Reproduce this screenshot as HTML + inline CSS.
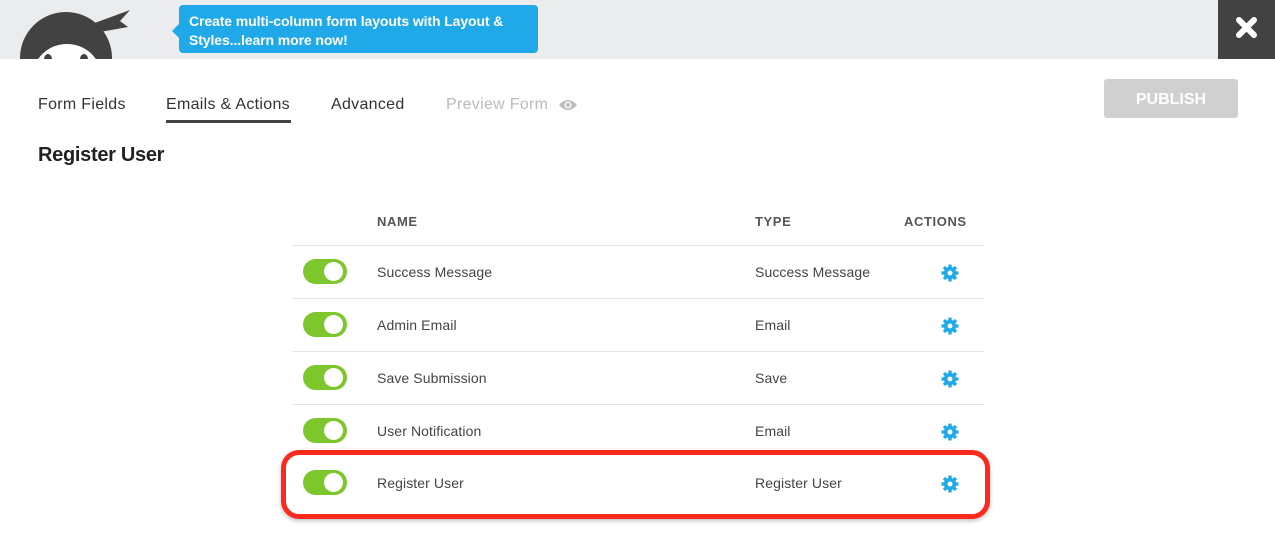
<!DOCTYPE html>
<html><head><style>
body{margin:0;width:1275px;height:545px;background:#fff;font-family:"Liberation Sans",sans-serif;position:relative;overflow:hidden}
.hdr{position:absolute;left:0;top:0;width:1275px;height:59px;background:#ebecee}
.close{position:absolute;left:1218px;top:0;width:57px;height:59px;background:#424242}
.tip{position:absolute;left:179px;top:5px;width:359px;height:48px;background:#1fa9e8;border-radius:4px;color:#fff;font-size:14px;line-height:19px;padding:7px 0 0 10px;box-sizing:border-box;font-weight:bold;letter-spacing:-0.1px}
.tip:before{content:"";position:absolute;left:-7px;top:19px;border-right:7px solid #1fa9e8;border-top:7px solid transparent;border-bottom:7px solid transparent}
.tab{position:absolute;top:96px;font-size:16px;color:#333;letter-spacing:0.3px}
.pub{position:absolute;left:1104px;top:79px;width:134px;height:39px;background:#d0d0d0;border-radius:3px;color:#fff;font-weight:bold;font-size:16px;text-align:center;line-height:41px}
h1{position:absolute;left:38px;top:144px;margin:0;font-size:20px;color:#222;font-weight:bold;letter-spacing:-0.3px}
.th{position:absolute;top:214px;font-size:13px;font-weight:bold;color:#555;letter-spacing:0.6px}
.row{position:absolute;left:292px;width:692px;height:53px;border-top:1px solid #e5e5e5}
.tg{position:absolute;left:11px;top:13px;width:44px;height:25px;border-radius:13px;background:#7dc62c}
.tg:after{content:"";position:absolute;right:4px;top:3px;width:19px;height:19px;border-radius:50%;background:#fff}
.n{position:absolute;left:85px;top:18px;font-size:14px;color:#444;letter-spacing:0.1px}
.t{position:absolute;left:463px;top:18px;font-size:14px;color:#444;letter-spacing:0.1px}
.g{position:absolute;left:649px;top:18px}
.red{position:absolute;left:281px;top:450px;width:709px;height:69px;border:5px solid #fb2a1f;border-radius:18px;box-sizing:border-box;box-shadow:0 2px 4px rgba(0,0,0,.25)}
</style></head><body>
<div class="hdr"></div>
<svg style="position:absolute;left:0;top:0" width="140" height="59">
<path d="M92 24 L130 10 L120 21 L128 27 L100 32Z" fill="#424242"/>
<circle cx="66" cy="58" r="46" fill="#424242"/>
<ellipse cx="67" cy="76" rx="34" ry="32" fill="#fff"/>
<ellipse cx="48" cy="59" rx="4" ry="5" fill="#424242"/>
<ellipse cx="84" cy="59" rx="4" ry="5" fill="#424242"/>
</svg>
<div class="tip">Create multi-column form layouts with Layout &amp;<br>Styles...learn more now!</div>
<div class="close"><svg width="57" height="59"><path d="M21 20 L36 35 M36 20 L21 35" stroke="#fff" stroke-width="6" stroke-linecap="round"/></svg></div>
<div class="tab" style="left:38px">Form Fields</div>
<div class="tab" style="left:166px">Emails &amp; Actions</div>
<div style="position:absolute;left:166px;top:120px;width:125px;height:3px;background:#444"></div>
<div class="tab" style="left:331px">Advanced</div>
<div class="tab" style="left:446px;color:#bbb">Preview Form</div>
<svg style="position:absolute;left:558px;top:98px" width="20" height="14"><path d="M1 7 Q10 -3 19 7 Q10 17 1 7Z" fill="#bbb"/><circle cx="10" cy="7" r="3.5" fill="#fff"/><circle cx="10" cy="7" r="2" fill="#bbb"/></svg>
<div class="pub">PUBLISH</div>
<h1>Register User</h1>
<div class="th" style="left:377px">NAME</div>
<div class="th" style="left:755px">TYPE</div>
<div class="th" style="left:904px">ACTIONS</div>
<div class="row" style="top:245px"><div class="tg"></div><div class="n">Success Message</div><div class="t">Success Message</div><svg class="g" width="18" height="18" viewBox="0 0 16 16"><g fill="#1fa9e8"><circle cx="8" cy="8" r="5.5"/><rect x="6.5" y="0.5" width="3" height="15"/><rect x="0.5" y="6.5" width="15" height="3"/><rect x="6.5" y="0.5" width="3" height="15" transform="rotate(45 8 8)"/><rect x="6.5" y="0.5" width="3" height="15" transform="rotate(-45 8 8)"/></g><circle cx="8" cy="8" r="2.2" fill="#fff"/></svg></div>
<div class="row" style="top:298px"><div class="tg"></div><div class="n">Admin Email</div><div class="t">Email</div><svg class="g" width="18" height="18" viewBox="0 0 16 16"><g fill="#1fa9e8"><circle cx="8" cy="8" r="5.5"/><rect x="6.5" y="0.5" width="3" height="15"/><rect x="0.5" y="6.5" width="15" height="3"/><rect x="6.5" y="0.5" width="3" height="15" transform="rotate(45 8 8)"/><rect x="6.5" y="0.5" width="3" height="15" transform="rotate(-45 8 8)"/></g><circle cx="8" cy="8" r="2.2" fill="#fff"/></svg></div>
<div class="row" style="top:351px"><div class="tg"></div><div class="n">Save Submission</div><div class="t">Save</div><svg class="g" width="18" height="18" viewBox="0 0 16 16"><g fill="#1fa9e8"><circle cx="8" cy="8" r="5.5"/><rect x="6.5" y="0.5" width="3" height="15"/><rect x="0.5" y="6.5" width="15" height="3"/><rect x="6.5" y="0.5" width="3" height="15" transform="rotate(45 8 8)"/><rect x="6.5" y="0.5" width="3" height="15" transform="rotate(-45 8 8)"/></g><circle cx="8" cy="8" r="2.2" fill="#fff"/></svg></div>
<div class="row" style="top:404px"><div class="tg"></div><div class="n">User Notification</div><div class="t">Email</div><svg class="g" width="18" height="18" viewBox="0 0 16 16"><g fill="#1fa9e8"><circle cx="8" cy="8" r="5.5"/><rect x="6.5" y="0.5" width="3" height="15"/><rect x="0.5" y="6.5" width="15" height="3"/><rect x="6.5" y="0.5" width="3" height="15" transform="rotate(45 8 8)"/><rect x="6.5" y="0.5" width="3" height="15" transform="rotate(-45 8 8)"/></g><circle cx="8" cy="8" r="2.2" fill="#fff"/></svg></div>
<div class="row" style="top:457px;border-top:none"><div class="tg"></div><div class="n">Register User</div><div class="t">Register User</div><svg class="g" width="18" height="18" viewBox="0 0 16 16"><g fill="#1fa9e8"><circle cx="8" cy="8" r="5.5"/><rect x="6.5" y="0.5" width="3" height="15"/><rect x="0.5" y="6.5" width="15" height="3"/><rect x="6.5" y="0.5" width="3" height="15" transform="rotate(45 8 8)"/><rect x="6.5" y="0.5" width="3" height="15" transform="rotate(-45 8 8)"/></g><circle cx="8" cy="8" r="2.2" fill="#fff"/></svg></div>
<div class="red"></div>
</body></html>
